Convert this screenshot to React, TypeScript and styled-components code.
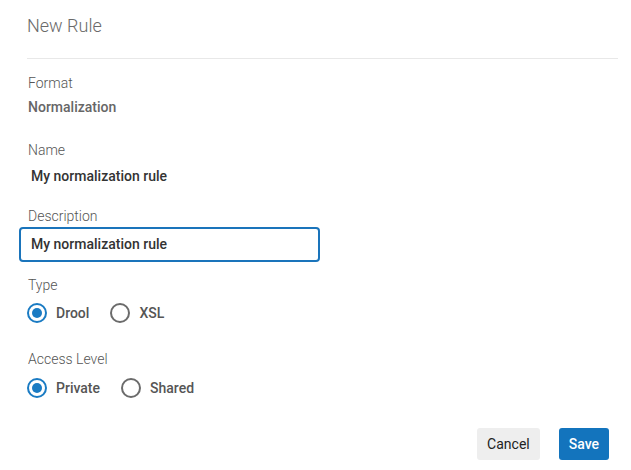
import React from "react";
import styled, { createGlobalStyle } from "styled-components";

const Global = createGlobalStyle`
  html, body { margin: 0; padding: 0; background: #fff; }
  body { font-family: Roboto, "Liberation Sans", Arial, sans-serif; }
  * { box-sizing: border-box; }
`;

const Dialog = styled.div`
  width: 631px;
  height: 470px;
  display: flex;
  flex-direction: column;
  background: #fff;
`;

const Header = styled.div`
  margin: 0 13px 0 27px;
  padding: 14px 0 20px;
  border-bottom: 1px solid #e8e8e8;
`;

const Title = styled.h1`
  margin: 0;
  font-size: 18px;
  line-height: 24px;
  font-weight: 300;
  color: #6a6a6a;
`;

const Body = styled.div`
  padding: 14px 19px 0;
  display: flex;
  flex-direction: column;
`;

const Label = styled.div<{ $mt?: number }>`
  margin-top: ${(p) => p.$mt ?? 0}px;
  padding-left: 9px;
  font-size: 14px;
  line-height: 20px;
  font-weight: 300;
  color: #555;
`;

const Value = styled.div<{ $mt?: number; $muted?: boolean }>`
  margin-top: ${(p) => p.$mt ?? 0}px;
  padding-left: ${(p) => (p.$muted ? 9 : 12)}px;
  font-size: 14px;
  line-height: 20px;
  font-weight: 500;
  color: ${(p) => (p.$muted ? "#666" : "#333")};
`;

const Input = styled.input`
  margin-top: 1px;
  width: 301px;
  height: 35px;
  border: 2px solid #1a74bb;
  border-radius: 4px;
  padding: 0 10px 1px;
  font-family: inherit;
  font-size: 14px;
  font-weight: 500;
  color: #333;
  outline: none;
`;

const RadioGroup = styled.div<{ $mt?: number; $gap: number }>`
  margin-top: ${(p) => p.$mt ?? 0}px;
  padding-left: 8px;
  display: flex;
  align-items: center;
  gap: ${(p) => p.$gap}px;
  height: 24px;
`;

const RadioOption = styled.label`
  display: flex;
  align-items: center;
  gap: 9px;
  font-size: 14px;
  font-weight: 500;
  color: #555;
  cursor: pointer;
`;

const Circle = styled.span<{ $on?: boolean }>`
  width: 20px;
  height: 20px;
  border-radius: 50%;
  border: 2px solid ${(p) => (p.$on ? "#1a7bc3" : "#6b6b6b")};
  display: flex;
  align-items: center;
  justify-content: center;
  &::after {
    content: "";
    width: 10px;
    height: 10px;
    border-radius: 50%;
    background: ${(p) => (p.$on ? "#1a7bc3" : "transparent")};
  }
`;

const Footer = styled.div`
  margin-top: 28px;
  padding-right: 22px;
  display: flex;
  justify-content: flex-end;
  gap: 19px;
`;

const Button = styled.button<{ $primary?: boolean }>`
  height: 32px;
  padding: 0 10px;
  border: none;
  border-radius: 3px;
  font-family: inherit;
  font-size: 14px;
  font-weight: ${(p) => (p.$primary ? 500 : 400)};
  background: ${(p) => (p.$primary ? "#1374bd" : "#eeeeee")};
  color: ${(p) => (p.$primary ? "#fff" : "#222")};
  cursor: pointer;
`;

const Radio = ({ on, label }: { on?: boolean; label: string }) => (
  <RadioOption>
    <Circle $on={on} />
    {label}
  </RadioOption>
);

export default function App() {
  return (
    <>
      <Global />
      <Dialog>
        <Header>
          <Title>New Rule</Title>
        </Header>
        <Body>
          <Label>Format</Label>
          <Value $mt={4} $muted>Normalization</Value>
          <Label $mt={23}>Name</Label>
          <Value $mt={6}>My normalization rule</Value>
          <Label $mt={20}>Description</Label>
          <Input defaultValue="My normalization rule" />
          <Label $mt={13}>Type</Label>
          <RadioGroup $mt={6} $gap={21}>
            <Radio on label="Drool" />
            <Radio label="XSL" />
          </RadioGroup>
          <Label $mt={24}>Access Level</Label>
          <RadioGroup $mt={7} $gap={21}>
            <Radio on label="Private" />
            <Radio label="Shared" />
          </RadioGroup>
        </Body>
        <Footer>
          <Button>Cancel</Button>
          <Button $primary>Save</Button>
        </Footer>
      </Dialog>
    </>
  );
}
